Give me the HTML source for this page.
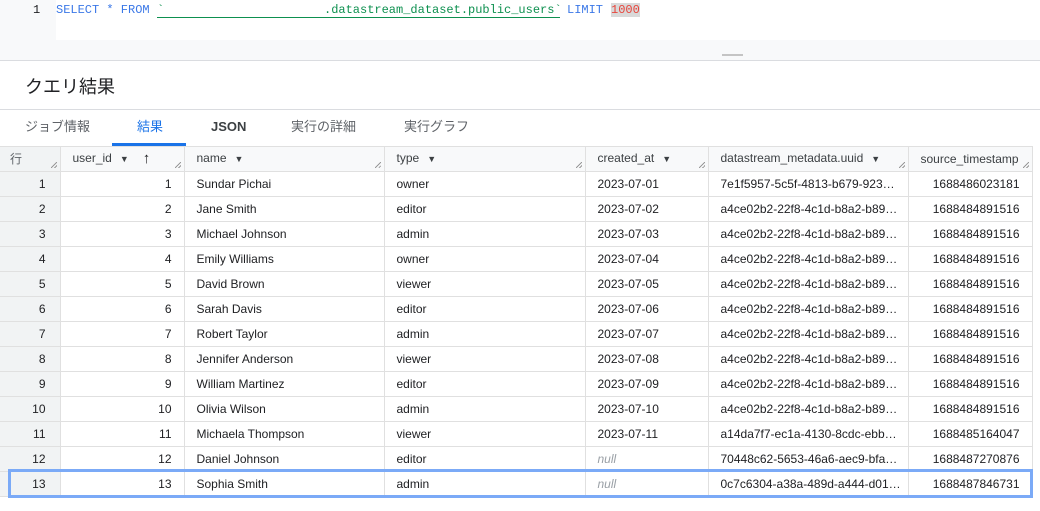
<!DOCTYPE html>
<html><head><meta charset="utf-8"><style>
*{margin:0;padding:0;box-sizing:border-box}
body{width:1040px;height:511px;background:#fff;font-family:"Liberation Sans","Noto Sans CJK JP",sans-serif;color:#202124;position:relative;overflow:hidden}
.abs{position:absolute}
.code{font-family:"Liberation Mono",monospace;font-size:12px;top:3px;white-space:pre}
.tab{position:absolute;top:119px;font-size:13px;line-height:16px;color:#5f6368}
table{position:absolute;left:0;top:146px;width:1032px;border-collapse:collapse;table-layout:fixed;font-size:12px}
td,th{height:25px;line-height:23px;border:1px solid #e0e0e0;padding:0 12px;white-space:nowrap;overflow:hidden;font-weight:normal;text-align:left}
th{background:#f8f9fa;color:#3c4043;position:relative}
td.r{text-align:right}
td.n{background:#f1f3f4;text-align:right;padding-right:14px;border-left:none}
th.n{background:#f1f3f4;padding-left:10px;color:#5f6368;border-left:none}
.null{color:#9aa0a6;font-style:italic}
.ar{font-size:9px;margin-left:8px}
.up{display:inline-block;margin-left:14px;font-size:15px;line-height:14px;font-weight:bold;color:#202124;vertical-align:-1px}
.gr{position:absolute;right:3px;bottom:3px;width:6px;height:6px;background:linear-gradient(135deg,transparent 45%,#999 45%,#999 55%,transparent 55%,transparent 75%,#999 75%,#999 85%,transparent 85%)}
</style></head><body>
<div class="abs" style="left:0;top:0;width:56px;height:60px;background:#f8f9fa"></div>
<div class="abs" style="left:56px;top:0;width:984px;height:40px;background:#fff"></div>
<div class="abs" style="left:56px;top:40px;width:984px;height:20px;background:#f8f9fa"></div>
<div class="abs" style="left:0;top:60px;width:1040px;height:1px;background:#dadce0"></div>
<div class="abs" style="left:722px;top:54px;width:21px;height:2px;background:#c4c4c4"></div>
<div class="abs code" style="left:33px;color:#202124">1</div>
<div class="abs code" style="left:56px;color:#3b78e7">SELECT * FROM</div>
<div class="abs code" style="left:157px;color:#0d904f">`</div>
<div class="abs" style="left:157px;top:17px;width:403px;height:1px;background:#0d904f"></div>
<div class="abs code" style="left:324px;color:#0d904f">.datastream_dataset.public_users`</div>
<div class="abs code" style="left:567px;color:#3b78e7">LIMIT</div>
<div class="abs code" style="left:611px;color:#e8453c;background:#d9d9d9">1000</div>
<div class="abs" style="left:25px;top:73px;font-size:18px">クエリ結果</div>
<div class="abs" style="left:0;top:109px;width:1040px;height:1px;background:#dadce0"></div>
<div class="tab" style="left:25px">ジョブ情報</div>
<div class="tab" style="left:137px;color:#1a73e8">結果</div>
<div class="tab" style="left:211px;color:#3c4043;font-weight:bold">JSON</div>
<div class="tab" style="left:291px">実行の詳細</div>
<div class="tab" style="left:404px">実行グラフ</div>
<div class="abs" style="left:112px;top:143px;width:74px;height:3px;background:#1a73e8"></div>
<table>
<colgroup><col style="width:60px"><col style="width:124px"><col style="width:200px"><col style="width:201px"><col style="width:123px"><col style="width:200px"><col style="width:124px"></colgroup>
<tr><th class="n">行<span class="gr"></span></th><th>user_id<span class="ar">▼</span><span class="up">↑</span><span class="gr"></span></th><th>name<span class="ar">▼</span><span class="gr"></span></th><th>type<span class="ar">▼</span><span class="gr"></span></th><th>created_at<span class="ar">▼</span><span class="gr"></span></th><th>datastream_metadata.uuid<span class="ar">▼</span><span class="gr"></span></th><th>source_timestamp<span class="gr"></span></th></tr>
<tr><td class="n">1</td><td class="r">1</td><td>Sundar Pichai</td><td>owner</td><td>2023-07-01</td><td>7e1f5957-5c5f-4813-b679-923…</td><td class="r">1688486023181</td></tr>
<tr><td class="n">2</td><td class="r">2</td><td>Jane Smith</td><td>editor</td><td>2023-07-02</td><td>a4ce02b2-22f8-4c1d-b8a2-b89…</td><td class="r">1688484891516</td></tr>
<tr><td class="n">3</td><td class="r">3</td><td>Michael Johnson</td><td>admin</td><td>2023-07-03</td><td>a4ce02b2-22f8-4c1d-b8a2-b89…</td><td class="r">1688484891516</td></tr>
<tr><td class="n">4</td><td class="r">4</td><td>Emily Williams</td><td>owner</td><td>2023-07-04</td><td>a4ce02b2-22f8-4c1d-b8a2-b89…</td><td class="r">1688484891516</td></tr>
<tr><td class="n">5</td><td class="r">5</td><td>David Brown</td><td>viewer</td><td>2023-07-05</td><td>a4ce02b2-22f8-4c1d-b8a2-b89…</td><td class="r">1688484891516</td></tr>
<tr><td class="n">6</td><td class="r">6</td><td>Sarah Davis</td><td>editor</td><td>2023-07-06</td><td>a4ce02b2-22f8-4c1d-b8a2-b89…</td><td class="r">1688484891516</td></tr>
<tr><td class="n">7</td><td class="r">7</td><td>Robert Taylor</td><td>admin</td><td>2023-07-07</td><td>a4ce02b2-22f8-4c1d-b8a2-b89…</td><td class="r">1688484891516</td></tr>
<tr><td class="n">8</td><td class="r">8</td><td>Jennifer Anderson</td><td>viewer</td><td>2023-07-08</td><td>a4ce02b2-22f8-4c1d-b8a2-b89…</td><td class="r">1688484891516</td></tr>
<tr><td class="n">9</td><td class="r">9</td><td>William Martinez</td><td>editor</td><td>2023-07-09</td><td>a4ce02b2-22f8-4c1d-b8a2-b89…</td><td class="r">1688484891516</td></tr>
<tr><td class="n">10</td><td class="r">10</td><td>Olivia Wilson</td><td>admin</td><td>2023-07-10</td><td>a4ce02b2-22f8-4c1d-b8a2-b89…</td><td class="r">1688484891516</td></tr>
<tr><td class="n">11</td><td class="r">11</td><td>Michaela Thompson</td><td>viewer</td><td>2023-07-11</td><td>a14da7f7-ec1a-4130-8cdc-ebb…</td><td class="r">1688485164047</td></tr>
<tr><td class="n">12</td><td class="r">12</td><td>Daniel Johnson</td><td>editor</td><td class="null">null</td><td>70448c62-5653-46a6-aec9-bfa…</td><td class="r">1688487270876</td></tr>
<tr><td class="n">13</td><td class="r">13</td><td>Sophia Smith</td><td>admin</td><td class="null">null</td><td>0c7c6304-a38a-489d-a444-d01…</td><td class="r">1688487846731</td></tr>
</table>
<div class="abs" style="left:8px;top:469px;width:1025px;height:29px;border:3px solid #7baaf7"></div>
</body></html>
